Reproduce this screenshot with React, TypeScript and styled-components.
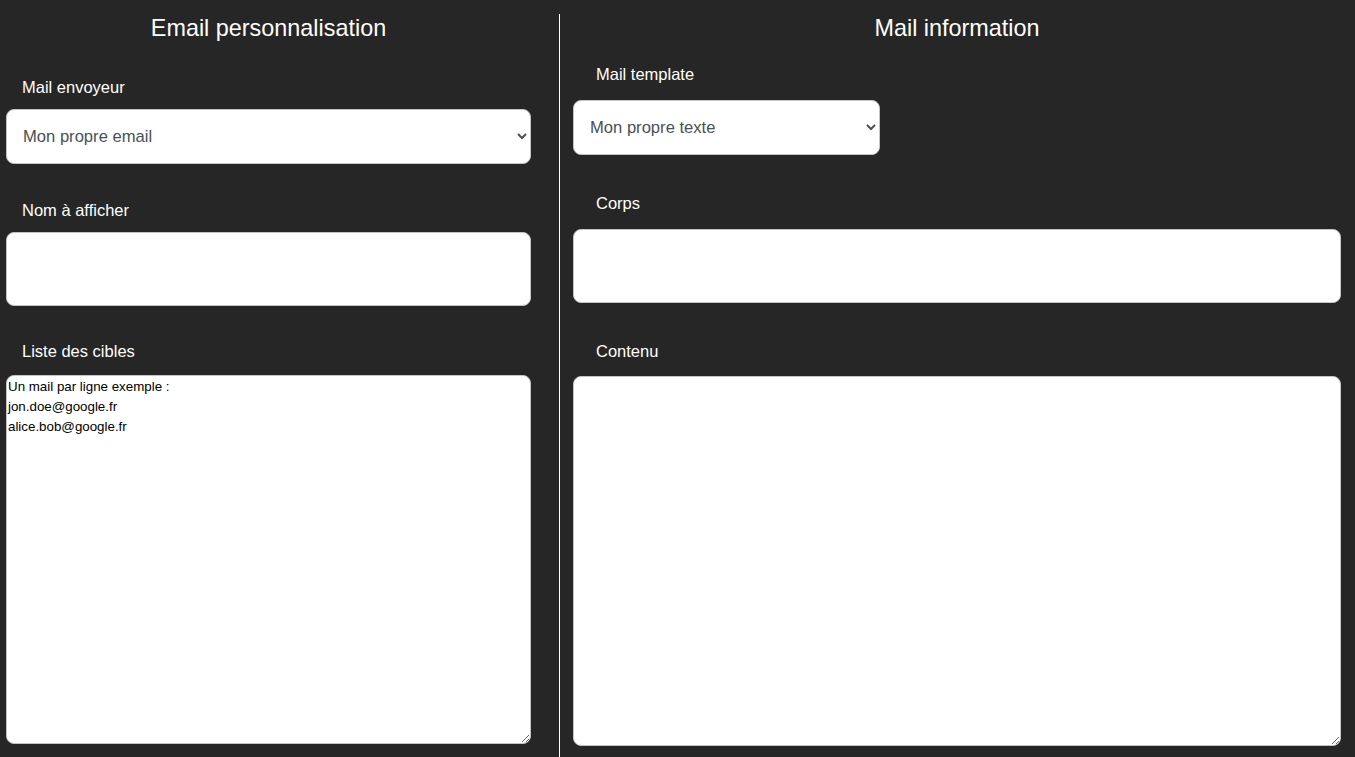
import React from "react";
import styled, { createGlobalStyle } from "styled-components";

const GlobalStyle = createGlobalStyle`
  html, body {
    margin: 0;
    padding: 0;
    background: #262626;
  }
  body {
    font-family: "Liberation Sans", Arial, sans-serif;
  }
  * { box-sizing: border-box; }
`;

const Page = styled.div`
  display: flex;
  height: 100vh;
  padding-top: 14px;
  background: #262626;
  color: #ffffff;
  overflow: hidden;
`;

const Panel = styled.section<{ $left: number; $right: number; $divider?: boolean }>`
  display: flex;
  flex-direction: column;
  flex: ${(p) => (p.$divider ? "1 1 auto" : "0 0 559px")};
  padding: 0 ${(p) => p.$right}px 0 ${(p) => p.$left}px;
  border-left: ${(p) => (p.$divider ? "1px solid #ffffff" : "none")};
`;

const Title = styled.h2`
  margin: 0;
  font-size: 23.4px;
  font-weight: 400;
  line-height: 28px;
  text-align: center;
  color: #ffffff;
`;

const Label = styled.label<{ $top: number; $bottom: number; $indent: number }>`
  display: block;
  margin: ${(p) => p.$top}px 0 ${(p) => p.$bottom}px;
  padding-left: ${(p) => p.$indent}px;
  font-size: 16.5px;
  line-height: 18px;
  color: #ffffff;
`;

const Select = styled.select<{ $width?: number }>`
  display: block;
  width: ${(p) => (p.$width ? `${p.$width}px` : "100%")};
  height: 55px;
  padding: 0 8px 0 12px;
  border: 1px solid #c4c4c4;
  border-radius: 8px;
  background: #ffffff;
  color: #495057;
  font-family: "Liberation Sans", Arial, sans-serif;
  font-size: 16.6px;
  outline: none;
`;

const Input = styled.input`
  display: block;
  width: 100%;
  height: 74px;
  padding: 0 16px;
  border: 1px solid #c4c4c4;
  border-radius: 8px;
  background: #ffffff;
  color: #212529;
  font-family: "Liberation Sans", Arial, sans-serif;
  font-size: 16.5px;
  outline: none;
`;

const TextArea = styled.textarea<{ $height: number }>`
  display: block;
  width: 100%;
  height: ${(p) => p.$height}px;
  padding: 1px;
  border: 1px solid #c4c4c4;
  border-radius: 8px;
  background: #ffffff;
  color: #000000;
  font-family: "Liberation Sans", Arial, sans-serif;
  font-size: 13.33px;
  line-height: 20px;
  outline: none;
`;

export default function App() {
  return (
    <>
      <GlobalStyle />
      <Page>
        <Panel $left={6} $right={28}>
          <Title>Email personnalisation</Title>
          <Label $top={36} $bottom={13} $indent={16}>Mail envoyeur</Label>
          <Select defaultValue="own">
            <option value="own">Mon propre email</option>
          </Select>
          <Label $top={37} $bottom={13} $indent={16}>Nom à afficher</Label>
          <Input type="text" />
          <Label $top={36} $bottom={15} $indent={16}>Liste des cibles</Label>
          <TextArea
            $height={369}
            defaultValue={"Un mail par ligne exemple :\njon.doe@google.fr\nalice.bob@google.fr"}
          />
        </Panel>
        <Panel $left={13} $right={14} $divider>
          <Title>Mail information</Title>
          <Label $top={23} $bottom={17} $indent={23}>Mail template</Label>
          <Select $width={307} defaultValue="own">
            <option value="own">Mon propre texte</option>
          </Select>
          <Label $top={39} $bottom={17} $indent={23}>Corps</Label>
          <Input type="text" />
          <Label $top={39} $bottom={16} $indent={23}>Contenu</Label>
          <TextArea $height={370} />
        </Panel>
      </Page>
    </>
  );
}
